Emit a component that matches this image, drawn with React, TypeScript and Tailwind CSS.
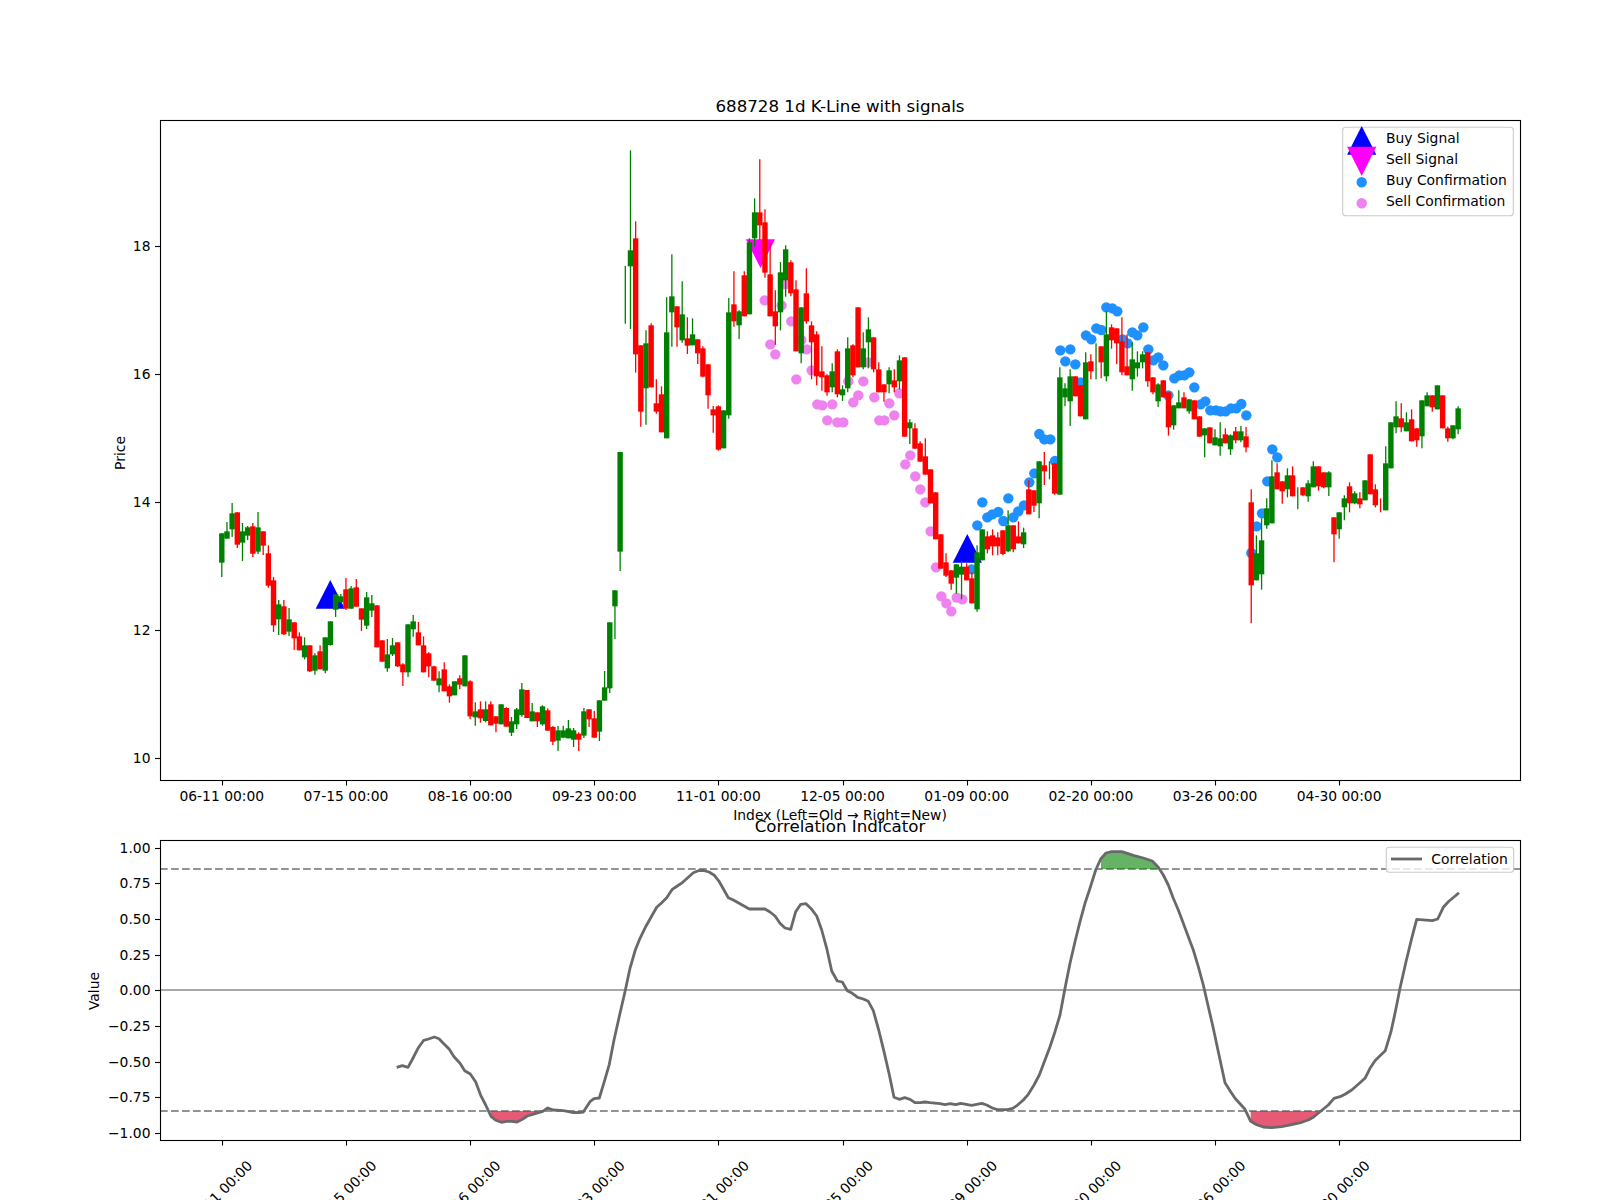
import React from 'react';

type Row = ['g' | 'r', number, number, number, number];
type Pt = [number, number];

// readings were taken at 3x, so every block carries the pixel origin it was measured from
const rows = (top: number, data: Row[]): Row[] =>
  data.map(([c, wt, bt, bb, wb]) => [c, top + wt / 3, top + bt / 3, top + bb / 3, top + wb / 3]);
const pts = (left: number, top: number, data: Pt[]): Pt[] =>
  data.map(([x, y]) => [left + x / 3, top + y / 3]);

const candles: Row[] = [
  ...rows(420, [
    ['g', 340, 340, 428, 471], ['g', 306, 334, 356, 356], ['g', 249, 280, 328, 351], ['r', 277, 277, 374, 384],
    ['g', 309, 334, 368, 423], ['g', 318, 322, 347, 360], ['r', 309, 319, 401, 411], ['g', 276, 322, 395, 402],
    ['r', 334, 334, 377, 405], ['r', 376, 400, 497, 503], ['r', 471, 481, 616, 636], ['g', 540, 553, 598, 645],
    ['r', 540, 559, 643, 645], ['g', 564, 598, 635, 648],
  ]),
  ...rows(600, [
    ['r', 67, 67, 115, 150], ['r', 97, 109, 151, 151], ['g', 112, 136, 172, 178], ['r', 136, 136, 214, 216],
    ['g', 160, 166, 212, 224], ['r', 136, 154, 208, 208], ['g', 112, 112, 212, 220], ['g', 64, 64, 135, 137],
  ]),
  ...rows(420, [
    ['g', 523, 523, 569, 591], ['g', 522, 529, 547, 547], ['r', 474, 508, 566, 570], ['g', 498, 505, 566, 566],
    ['r', 477, 502, 560, 560], ['r', 565, 565, 599, 633], ['g', 516, 532, 617, 627], ['g', 525, 550, 572, 591],
  ]),
  ...rows(600, [
    ['r', 16, 16, 142, 142], ['r', 121, 121, 185, 185], ['g', 117, 163, 205, 215], ['g', 114, 136, 163, 168],
    ['r', 127, 127, 199, 201], ['r', 190, 193, 217, 258], ['g', 73, 73, 217, 231], ['g', 45, 64, 88, 110],
    ['r', 66, 97, 136, 136], ['r', 109, 136, 217, 217], ['r', 157, 160, 199, 232], ['r', 197, 199, 242, 242],
    ['g', 214, 235, 256, 277], ['r', 187, 208, 274, 274], ['r', 253, 259, 289, 308], ['g', 244, 244, 286, 286],
    ['r', 226, 235, 254, 268], ['g', 166, 166, 259, 259], ['r', 241, 244, 349, 358], ['g', 307, 334, 352, 377],
    ['r', 304, 328, 355, 368], ['g', 304, 328, 363, 367], ['r', 304, 313, 376, 376],
  ]),
  ...rows(580, [
    ['r', 409, 409, 431, 457], ['g', 373, 373, 433, 433], ['r', 382, 384, 440, 440], ['g', 411, 424, 458, 468],
    ['g', 384, 388, 433, 447], ['g', 309, 328, 405, 410], ['r', 330, 330, 414, 414], ['g', 369, 394, 424, 424],
    ['r', 397, 397, 424, 441], ['g', 376, 379, 433, 437], ['r', 385, 391, 452, 452], ['r', 438, 441, 485, 495],
    ['g', 438, 451, 482, 513], ['g', 437, 451, 473, 473], ['g', 420, 445, 475, 475], ['g', 444, 451, 479, 501],
    ['r', 457, 461, 479, 513], ['g', 384, 394, 467, 474], ['r', 388, 388, 418, 441], ['r', 393, 415, 473, 473],
    ['g', 361, 361, 455, 483], ['g', 273, 322, 362, 362], ['g', 127, 127, 325, 339], ['g', 31, 31, 79, 177],
  ]),
  ...rows(440, [['g', 36, 36, 335, 393]]),
  ...rows(130, [
    ['g', 408, 494, 494, 581], ['g', 61, 361, 409, 597], ['r', 274, 325, 673, 728], ['r', 646, 646, 845, 890],
    ['g', 601, 640, 775, 884], ['r', 580, 586, 772, 772], ['r', 748, 820, 845, 851], ['r', 769, 793, 907, 907],
    ['g', 502, 607, 925, 925], ['g', 373, 499, 547, 650], ['r', 529, 529, 592, 650], ['g', 454, 553, 631, 638],
    ['r', 562, 625, 647, 672], ['g', 565, 613, 646, 646], ['r', 628, 628, 670, 702], ['r', 649, 655, 740, 742],
    ['r', 703, 703, 796, 836], ['r', 828, 838, 856, 908], ['r', 826, 829, 959, 962], ['g', 841, 841, 955, 955],
    ['g', 504, 547, 856, 866], ['r', 424, 523, 574, 590], ['g', 541, 544, 586, 627], ['r', 424, 436, 559, 559],
    ['g', 325, 337, 553, 553], ['g', 205, 247, 325, 350], ['r', 88, 247, 286, 330], ['r', 238, 277, 428, 443],
    ['r', 340, 433, 559, 559], ['r', 481, 544, 589, 644], ['g', 396, 427, 547, 601], ['g', 346, 358, 451, 500],
    ['r', 391, 397, 490, 499], ['r', 451, 478, 664, 664], ['g', 532, 532, 670, 700], ['r', 415, 490, 574, 581],
    ['r', 574, 586, 637, 748], ['r', 604, 613, 739, 766], ['r', 649, 724, 742, 782], ['r', 733, 736, 787, 797],
    ['g', 700, 724, 772, 787], ['r', 658, 664, 793, 802], ['g', 766, 778, 796, 813], ['g', 622, 655, 775, 787],
    ['r', 643, 646, 736, 742], ['r', 532, 532, 712, 712], ['g', 607, 655, 712, 718], ['g', 562, 598, 637, 715],
    ['r', 622, 622, 718, 727], ['r', 697, 718, 787, 787], ['r', 763, 763, 787, 815], ['g', 712, 721, 763, 790],
    ['r', 718, 751, 772, 787], ['g', 676, 691, 754, 778],
  ]),
  ...rows(280, [
    ['r', 232, 232, 470, 470], ['g', 418, 427, 445, 492], ['r', 430, 445, 506, 506], ['r', 484, 490, 545, 545],
    ['r', 475, 529, 584, 584], ['r', 568, 568, 670, 670], ['r', 637, 637, 778, 778], ['r', 763, 763, 866, 866],
    ['r', 820, 847, 887, 891], ['r', 871, 871, 911, 929], ['g', 853, 853, 893, 941], ['g', 844, 860, 884, 958],
    ['r', 850, 860, 901, 901], ['r', 877, 895, 970, 970], ['g', 796, 817, 988, 995], ['g', 748, 748, 841, 841],
    ['r', 754, 769, 808, 820], ['r', 748, 766, 799, 826], ['r', 757, 772, 799, 826], ['r', 751, 751, 822, 826],
    ['g', 691, 736, 814, 817], ['r', 736, 736, 808, 817], ['r', 724, 769, 790, 790], ['g', 743, 757, 793, 804],
    ['r', 601, 628, 703, 703], ['r', 631, 631, 677, 696], ['g', 544, 544, 670, 715], ['r', 516, 556, 574, 615],
    ['g', 544, 570, 570, 598], ['r', 550, 550, 641, 644], ['g', 262, 292, 644, 644], ['g', 310, 325, 352, 379],
    ['g', 268, 289, 364, 438], ['r', 289, 289, 349, 349], ['r', 316, 316, 409, 409], ['g', 217, 247, 418, 418],
    ['r', 223, 244, 274, 298], ['g', 190, 240, 240, 298], ['r', 199, 199, 247, 295], ['g', 94, 163, 289, 304],
    ['r', 133, 142, 181, 206], ['r', 145, 145, 190, 253], ['r', 112, 184, 277, 286], ['r', 163, 259, 286, 286],
    ['g', 187, 238, 298, 332], ['g', 214, 247, 265, 290], ['g', 214, 223, 247, 265], ['r', 217, 217, 304, 320],
    ['r', 292, 292, 337, 343], ['g', 310, 313, 364, 381], ['r', 301, 301, 352, 352], ['r', 337, 337, 442, 467],
    ['g', 376, 376, 436, 449], ['g', 331, 367, 385, 385], ['r', 337, 352, 385, 385], ['g', 358, 358, 394, 401],
    ['r', 361, 361, 418, 418],
  ]),
  ...rows(360, [
    ['r', 169, 169, 230, 230], ['g', 205, 205, 226, 292], ['r', 202, 202, 250, 250], ['g', 208, 232, 256, 256],
    ['g', 187, 235, 259, 287], ['r', 205, 223, 250, 250], ['g', 223, 226, 268, 285], ['r', 201, 214, 241, 250],
    ['g', 198, 214, 241, 247], ['r', 201, 229, 262, 277], ['r', 388, 427, 676, 790], ['g', 526, 580, 661, 661],
    ['g', 475, 541, 643, 689], ['g', 415, 445, 496, 506], ['g', 301, 349, 490, 490], ['r', 310, 337, 388, 388],
    ['r', 364, 364, 394, 431], ['g', 325, 346, 388, 412], ['r', 319, 346, 409, 409], ['g', 382, 410, 410, 448],
    ['r', 382, 382, 406, 409], ['g', 361, 370, 409, 425], ['g', 304, 319, 382, 382], ['r', 319, 319, 379, 392],
    ['r', 337, 337, 382, 385], ['g', 334, 337, 382, 408], ['r', 472, 472, 523, 607], ['g', 457, 457, 508, 536],
    ['g', 406, 415, 442, 481], ['r', 367, 379, 430, 457], ['g', 394, 400, 430, 433], ['r', 397, 415, 433, 445],
    ['g', 361, 361, 421, 421], ['r', 283, 283, 403, 403], ['r', 373, 388, 436, 442], ['r', 415, 436, 436, 457],
    ['g', 259, 310, 451, 451], ['g', 187, 187, 325, 325], ['g', 124, 169, 202, 220], ['r', 130, 175, 202, 217],
    ['g', 157, 187, 214, 214], ['r', 148, 178, 244, 244], ['r', 205, 205, 241, 260], ['g', 121, 121, 229, 265],
    ['g', 97, 106, 139, 139], ['r', 106, 106, 142, 155], ['g', 76, 76, 148, 148], ['r', 106, 106, 205, 205],
    ['r', 200, 205, 235, 245], ['g', 196, 196, 235, 238], ['g', 139, 145, 208, 223],
  ]),
];

const sellDots: Pt[] = [
  ...pts(600, 130, [
    [494, 511], [545, 526], [511, 643], [526, 673], [574, 574], [589, 748], [556, 463], [604, 630], [620, 658],
    [635, 721], [652, 823], [667, 826], [697, 823], [682, 871], [712, 877], [730, 877], [760, 817], [775, 796],
    [745, 754], [790, 754], [805, 697], [823, 802], [838, 871], [853, 871], [868, 820], [883, 856], [898, 790],
    [931, 976], [916, 1003],
  ]),
  ...pts(900, 280, [
    [46, 589], [61, 628], [76, 667], [92, 754], [108, 862], [124, 949], [139, 970], [154, 994], [170, 953], [187, 958],
  ]),
];

const buyDots: Pt[] = [
  ...pts(900, 280, [
    [215, 868], [232, 736], [247, 667], [262, 712], [277, 703], [295, 696], [310, 723], [325, 655], [340, 712],
    [355, 694], [372, 676], [388, 607], [403, 580], [418, 462], [433, 478], [451, 478], [465, 543], [481, 211],
    [496, 244], [511, 208], [526, 253], [541, 307], [558, 166], [574, 178], [589, 145], [604, 150], [619, 82],
    [637, 85], [652, 94], [668, 178], [683, 190], [697, 157], [712, 166], [730, 142], [745, 208], [760, 241],
    [775, 232], [790, 256], [805, 346], [823, 295], [838, 286], [853, 286], [868, 277], [883, 322], [902, 373],
    [916, 364], [931, 391], [948, 391],
  ]),
  ...pts(1200, 360, [
    [62, 154], [77, 154], [93, 145], [109, 145], [124, 132], [139, 166], [154, 579], [170, 499], [186, 460],
    [202, 364], [217, 268], [232, 292],
  ]),
];

const correlation: Pt[] = [
  ...pts(90, 780, [
    [920, 862], [937, 857], [954, 862], [966, 840], [984, 805], [1001, 781], [1016, 777], [1033, 771], [1047, 776],
    [1060, 790], [1078, 808], [1092, 830], [1110, 850], [1124, 872], [1141, 882], [1157, 906], [1172, 946],
    [1187, 975], [1203, 1009], [1218, 1021], [1234, 1027], [1250, 1024], [1265, 1024], [1281, 1026], [1297, 1018],
    [1312, 1008], [1328, 1003], [1358, 994], [1373, 984], [1390, 990], [1420, 992], [1436, 995], [1450, 998],
    [1466, 998], [1480, 996],
  ]),
  ...pts(590, 780, [
    [0, 965], [12, 956], [28, 954], [43, 905], [58, 853], [72, 780], [90, 700], [105, 635], [120, 565], [136, 510],
    [150, 475], [167, 440], [183, 412], [200, 382], [215, 368], [230, 353], [247, 328], [262, 318], [278, 307],
    [295, 292], [310, 278], [325, 272], [340, 271], [357, 276], [373, 286], [388, 305], [415, 353], [430, 360],
    [478, 387], [525, 387], [540, 396], [555, 408], [570, 430], [585, 444], [602, 448], [617, 395], [632, 373],
    [648, 371], [665, 388], [680, 408], [695, 450], [710, 505], [725, 573], [742, 603], [757, 606], [772, 632],
    [787, 640], [803, 652], [820, 657], [835, 664], [850, 692], [866, 750], [882, 815], [897, 880], [912, 952],
    [928, 958], [944, 953], [960, 958], [975, 968], [990, 968], [1005, 966], [1020, 968], [1050, 971], [1065, 974],
    [1080, 971], [1097, 974], [1112, 970], [1145, 976], [1175, 970], [1190, 975], [1207, 984], [1222, 989],
    [1252, 989], [1268, 985], [1282, 976], [1300, 960], [1315, 943], [1332, 915], [1348, 885], [1365, 840],
    [1380, 800], [1395, 755], [1410, 705], [1425, 625], [1440, 550], [1455, 485], [1470, 425], [1485, 370],
  ]),
  ...pts(1090, 780, [
    [0, 325], [17, 270], [32, 237], [48, 219], [65, 215], [95, 215], [112, 220], [130, 226], [160, 234], [187, 243],
    [205, 262], [220, 285], [235, 315], [250, 355], [265, 390], [280, 430], [295, 470], [310, 510], [325, 560],
    [340, 615], [355, 680], [370, 745], [385, 815], [405, 908], [420, 932], [435, 955], [465, 988], [482, 1024],
    [500, 1034], [520, 1041], [545, 1043], [575, 1040], [605, 1034], [635, 1027], [655, 1020], [670, 1012], [690, 995],
    [715, 975], [732, 955], [750, 950], [765, 943], [785, 930], [805, 913], [825, 895], [840, 865], [855, 842],
    [870, 827], [886, 812], [903, 755], [917, 690], [930, 625], [948, 545], [965, 475], [980, 418], [1027, 422],
    [1043, 417], [1060, 382], [1075, 365], [1107, 338],
  ]),
];

const greenZone = pts(1090, 780, [
  [33, 267], [33, 237], [48, 219], [65, 215], [95, 215], [112, 220], [130, 226], [160, 234], [187, 243], [205, 267],
]);
const redZones = [
  pts(90, 780, [
    [1203, 993], [1203, 1009], [1218, 1021], [1234, 1027], [1250, 1024], [1265, 1024], [1281, 1026], [1297, 1018],
    [1312, 1008], [1328, 1003], [1345, 993],
  ]),
  pts(90, 780, [[1436, 993], [1436, 995], [1450, 998], [1466, 998], [1480, 996], [1482, 993]]),
  pts(1090, 780, [
    [482, 993], [482, 1024], [500, 1034], [520, 1041], [545, 1043], [575, 1040], [605, 1034], [635, 1027], [655, 1020],
    [670, 1012], [690, 993],
  ]),
];

const tickLabels = [
  '06-11 00:00', '07-15 00:00', '08-16 00:00', '09-23 00:00', '11-01 00:00',
  '12-05 00:00', '01-09 00:00', '02-20 00:00', '03-26 00:00', '04-30 00:00',
];
const barX = (i: number) => 221.8 + 5.173 * i;
const tickX = (i: number) => Math.round(barX(i * 24)) + 0.5;
const priceTicks: [string, number][] = [['10', 757.7], ['12', 629.7], ['14', 501.7], ['16', 373.7], ['18', 245.7]];
const valueTicks = ['1.00', '0.75', '0.50', '0.25', '0.00', '\u22120.25', '\u22120.50', '\u22120.75', '\u22121.00'];

const line = (p: Pt[]) => p.map(([x, y]) => `${x.toFixed(1)},${y.toFixed(1)}`).join(' ');

const Triangle = ({ x, tip, base, color }: { x: number; tip: number; base: number; color: string }) => (
  <polygon points={`${x},${tip} ${x - 14.6},${base} ${x + 14.6},${base}`} fill={color} />
);

const YTicks = ({ ticks }: { ticks: [string, number][] }) => (
  <>
    {ticks.map(([label, y]) => (
      <g key={label}>
        <line x1={155} x2={160} y1={Math.round(y) + 0.5} y2={Math.round(y) + 0.5} stroke="#000" strokeWidth={1.1} />
        <text x={150.5} y={y + 5} textAnchor="end" className="fill-black">{label}</text>
      </g>
    ))}
  </>
);

const PriceChart = () => (
  <svg viewBox="0 0 1600 830" width={1600} height={830} overflow="visible" className="block text-[13.89px]">
    <text x={840} y={111.5} textAnchor="middle" className="fill-black text-[16.67px]">688728 1d K-Line with signals</text>

    <Triangle x={330.3} tip={580} base={608.7} color="#0000ff" />
    <Triangle x={967.3} tip={534} base={562.7} color="#0000ff" />
    <Triangle x={760.5} tip={268} base={239.3} color="#ff00ff" />
    {buyDots.map(([x, y], i) => <circle key={i} cx={x} cy={y} r={5.2} fill="#1e90ff" />)}
    {sellDots.map(([x, y], i) => <circle key={i} cx={x} cy={y} r={5.2} fill="#ee82ee" />)}

    {candles.map(([c, wt, bt, bb, wb], i) => {
      const color = c === 'g' ? '#008000' : '#ff0000';
      return (
        <g key={i}>
          <line x1={barX(i)} x2={barX(i)} y1={wt} y2={wb} stroke={color} strokeWidth={1.3} />
          {bb > bt && <rect x={barX(i) - 2.7} y={bt} width={5.4} height={bb - bt} fill={color} />}
        </g>
      );
    })}

    <rect x={160.5} y={120.5} width={1360} height={660} fill="none" stroke="#000" strokeWidth={1.1} />
    <YTicks ticks={priceTicks} />
    {tickLabels.map((label, i) => (
      <g key={label}>
        <line x1={tickX(i)} x2={tickX(i)} y1={780} y2={785.5} stroke="#000" strokeWidth={1.1} />
        <text x={barX(i * 24)} y={800.7} textAnchor="middle" className="fill-black">{label}</text>
      </g>
    ))}
    <text transform="translate(124.5,453) rotate(-90)" textAnchor="middle" className="fill-black">Price</text>
    <text x={840} y={820} textAnchor="middle" className="fill-black">Index (Left=Old → Right=New)</text>

    <rect x={1342.7} y={127.3} width={170.6} height={88.4} rx={3} fill="#fff" fillOpacity={0.8} stroke="#ccc" strokeWidth={1.1} />
    <Triangle x={1361.7} tip={126} base={154.7} color="#0000ff" />
    <Triangle x={1361.7} tip={176} base={146.7} color="#ff00ff" />
    <circle cx={1361.7} cy={182.3} r={5.2} fill="#1e90ff" />
    <circle cx={1361.7} cy={203.3} r={5.2} fill="#ee82ee" />
    <text x={1386} y={143.3} className="fill-black">Buy Signal</text>
    <text x={1386} y={164.3} className="fill-black">Sell Signal</text>
    <text x={1386} y={185.3} className="fill-black">Buy Confirmation</text>
    <text x={1386} y={206.3} className="fill-black">Sell Confirmation</text>
  </svg>
);

const CorrelationChart = () => (
  <svg viewBox="0 830 1600 370" width={1600} height={370} overflow="visible" className="block text-[13.89px]">
    <text x={840} y={832.3} textAnchor="middle" className="fill-black text-[16.67px]">Correlation Indicator</text>

    <line x1={160} x2={1520} y1={990} y2={990} stroke="#a9a9a9" strokeWidth={2.08} />
    <line x1={160} x2={1520} y1={869} y2={869} stroke="#808080" strokeOpacity={0.85} strokeWidth={2.08} strokeDasharray="7.7 3.3" />
    <line x1={160} x2={1520} y1={1111} y2={1111} stroke="#808080" strokeOpacity={0.85} strokeWidth={2.08} strokeDasharray="7.7 3.3" />
    <polygon points={line(greenZone)} fill="#008000" fillOpacity={0.6} />
    {redZones.map((zone, i) => <polygon key={i} points={line(zone)} fill="#dc143c" fillOpacity={0.7} />)}
    <polyline points={line(correlation)} fill="none" stroke="#696969" strokeWidth={2.8} strokeLinejoin="round" />

    <rect x={160.5} y={840.5} width={1360} height={300} fill="none" stroke="#000" strokeWidth={1.1} />
    <YTicks ticks={valueTicks.map((label, i) => [label, 847.5 + i * 35.67] as [string, number])} />
    {tickLabels.map((label, i) => (
      <g key={label}>
        <line x1={tickX(i)} x2={tickX(i)} y1={1140} y2={1145.5} stroke="#000" strokeWidth={1.1} />
        <text transform={`translate(${barX(i * 24) - 2},1193) rotate(-45)`} textAnchor="middle" dy={5} className="fill-black">{label}</text>
      </g>
    ))}
    <text transform="translate(98.5,991) rotate(-90)" textAnchor="middle" className="fill-black">Value</text>

    <rect x={1386.3} y={847.3} width={127.4} height={25} rx={3} fill="#fff" fillOpacity={0.8} stroke="#ccc" strokeWidth={1.1} />
    <line x1={1391} x2={1422} y1={859} y2={859} stroke="#696969" strokeWidth={2.8} />
    <text x={1431.3} y={864} className="fill-black">Correlation</text>
  </svg>
);

export default function App() {
  return (
    <div className="w-[1600px] h-[1200px] overflow-hidden bg-white flex flex-col font-['DejaVu_Sans',sans-serif]">
      <PriceChart />
      <CorrelationChart />
    </div>
  );
}
